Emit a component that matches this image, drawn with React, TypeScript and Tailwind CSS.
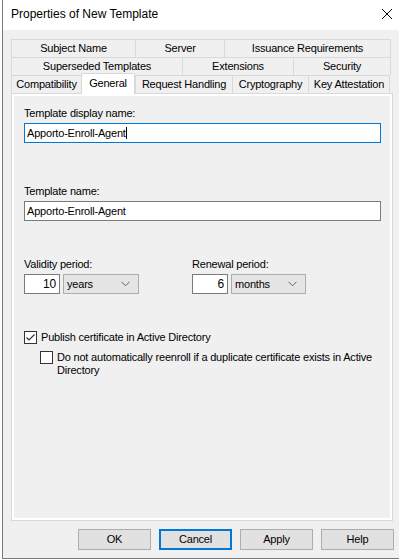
import React from 'react';

const font = { fontFamily: '"Liberation Sans", Arial, sans-serif' };

function Tab({ label, w, last, selected }: { label: string; w: string; last?: boolean; selected?: boolean }) {
  if (selected) {
    return (
      <div
        className={`relative z-10 ${w} h-[21px] -mt-[2px] flex items-start justify-center pt-[2px] bg-white border-l border-t border-r border-[#d9d9d9] leading-[15px] whitespace-nowrap`}
      >
        {label}
      </div>
    );
  }
  return (
    <div
      className={`${w} h-[18px] flex items-center justify-center border-l border-t ${last ? 'border-r' : ''} border-[#d9d9d9] bg-[#f0f0f0] leading-[15px] whitespace-nowrap`}
    >
      {label}
    </div>
  );
}

function Chevron() {
  return (
    <svg width="9" height="6" viewBox="0 0 9 6" className="text-[#606060]">
      <path d="M0.5 0.8 L4.5 4.8 L8.5 0.8" fill="none" stroke="currentColor" strokeWidth="1" />
    </svg>
  );
}

function Period({ value, unit, numW, dropW }: { value: string; unit: string; numW: string; dropW: string }) {
  return (
    <div className="flex mt-[2px] gap-[3px]">
      <div className={`${numW} h-[20px] bg-white border border-[#7a7a7a] flex items-center justify-end pr-[3px] text-[12px]`}>
        {value}
      </div>
      <div className={`${dropW} h-[20px] bg-[#e5e5e5] border border-[#adadad] flex items-center justify-between pl-[3px] pr-[8px]`}>
        <span>{unit}</span>
        <Chevron />
      </div>
    </div>
  );
}

function CheckBox({ checked }: { checked?: boolean }) {
  return (
    <div className="w-[13px] h-[13px] shrink-0 bg-white border border-[#333333] flex items-center justify-center">
      {checked && (
        <svg width="11" height="11" viewBox="0 0 11 11">
          <path d="M1.5 5.5 L4 8 L9.5 2.5" fill="none" stroke="#333333" strokeWidth="1.2" />
        </svg>
      )}
    </div>
  );
}

function Button({ label, focused }: { label: string; focused?: boolean }) {
  return (
    <div
      className={`w-[73px] h-[21px] flex items-center justify-center bg-[#e1e1e1] ${
        focused ? 'border-2 border-[#0078d7]' : 'border border-[#adadad]'
      }`}
    >
      {label}
    </div>
  );
}

export default function App() {
  return (
    <div className="w-[399px] h-[560px] bg-white text-[11px] tracking-[-0.2px] text-black overflow-hidden" style={font}>
      <div className="ml-[2px] w-[397px] h-[559px] border-l border-b border-[#7a7a7a] flex flex-col bg-[#f0f0f0]">
        {/* title bar */}
        <div className="h-[30px] bg-white flex items-center justify-between pl-[8px] pr-[7px] shrink-0">
          <span className="text-[12px] tracking-normal leading-[15px] -mt-[2px]">Properties of New Template</span>
          <svg width="10" height="10" viewBox="0 0 10 10" className="-mt-[2px]">
            <path d="M0 0 L10 10 M10 0 L0 10" stroke="#000" strokeWidth="1" />
          </svg>
        </div>

        <div className="flex-1 pl-[8px] pt-[9px]">
          {/* tabs */}
          <div className="flex flex-col">
            <div className="flex">
              <Tab label="Subject Name" w="w-[124px]" />
              <Tab label="Server" w="w-[89px]" />
              <Tab label="Issuance Requirements" w="w-[167px]" last />
            </div>
            <div className="flex">
              <Tab label="Superseded Templates" w="w-[171px]" />
              <Tab label="Extensions" w="w-[111px]" />
              <Tab label="Security" w="w-[98px]" last />
            </div>
            <div className="flex h-[18px]">
              <Tab label="Compatibility" w="w-[70px]" />
              <Tab label="General" w="w-[54px]" selected />
              <Tab label="Request Handling" w="w-[97px]" />
              <Tab label="Cryptography" w="w-[76px]" />
              <Tab label="Key Attestation" w="w-[82px]" last />
            </div>
          </div>

          {/* panel */}
          <div className="w-[382px] h-[428px] border border-[#d9d9d9] shadow-[inset_0_0_0_2px_#ffffff] pl-[12px] pt-[12px]">
            <div className="leading-[15px]">Template display name:</div>
            <div className="mt-[2px] w-[357px] h-[20px] bg-white border border-[#0078d7] flex items-center pl-[2px]">
              <span>Apporto-Enroll-Agent</span>
              <span className="w-px h-[12px] bg-black" />
            </div>

            <div className="mt-[41px] leading-[15px]">Template name:</div>
            <div className="mt-[2px] w-[357px] h-[20px] bg-white border border-[#7a7a7a] flex items-center pl-[2px]">
              Apporto-Enroll-Agent
            </div>

            <div className="mt-[36px] flex">
              <div className="w-[168px]">
                <div className="leading-[15px]">Validity period:</div>
                <Period value="10" unit="years" numW="w-[36px]" dropW="w-[76px]" />
              </div>
              <div>
                <div className="leading-[15px]">Renewal period:</div>
                <Period value="6" unit="months" numW="w-[36px]" dropW="w-[75px]" />
              </div>
            </div>

            <div className="mt-[36px] flex items-center gap-[4px] h-[15px]">
              <CheckBox checked />
              <span className="leading-[15px]">Publish certificate in Active Directory</span>
            </div>

            <div className="mt-[6px] ml-[16px] flex items-start gap-[4px]">
              <CheckBox />
              <span className="leading-[13px] whitespace-nowrap">
                Do not automatically reenroll if a duplicate certificate exists in Active
                <br />
                Directory
              </span>
            </div>
          </div>

          {/* buttons */}
          <div className="mt-[8px] flex justify-end gap-[8px] pr-[5px]">
            <Button label="OK" />
            <Button label="Cancel" focused />
            <Button label="Apply" />
            <Button label="Help" />
          </div>
        </div>
      </div>
    </div>
  );
}
